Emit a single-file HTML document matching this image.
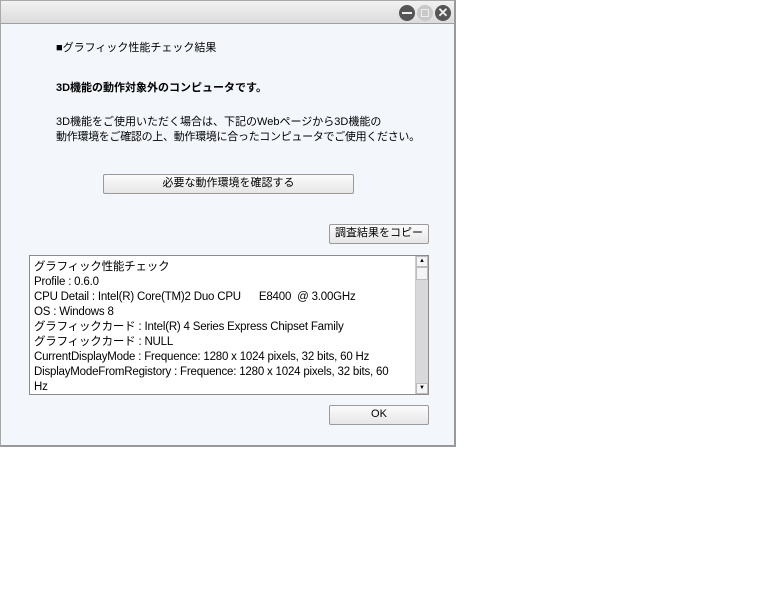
<!DOCTYPE html>
<html><head><meta charset="utf-8"><style>
*{margin:0;padding:0;box-sizing:border-box}
body{width:768px;height:614px;background:#fff;font-family:"Liberation Sans","Noto Sans CJK JP",sans-serif;font-size:11px;color:#000;position:relative;overflow:hidden}
#win{position:absolute;left:0;top:0;width:456px;height:447px;background:#f3f6fb;border:1px solid #a8a8a8;border-right:2px solid #999;border-bottom:2px solid #999}
#title{position:absolute;left:0;top:0;width:100%;height:23px;background:linear-gradient(#f2f2f2,#dcdcdc);border-bottom:1px solid #a0a0a0}
.c{position:absolute;top:4px;width:16px;height:16px;border-radius:50%}
.t{position:absolute;white-space:nowrap;line-height:15px}
.btn{position:absolute;border:1px solid #9a9a9a;border-radius:2px;background:linear-gradient(#fbfbfb,#e6e6e6);text-align:center;line-height:17px;font-size:11px}
#box{position:absolute;left:28px;top:254px;width:400px;height:140px;border:1px solid #8a8a8a;background:#fff;overflow:hidden}
#sb{position:absolute;right:0;top:0;width:13px;height:138px;background:#d8d8d8;border-left:1px solid #ccc}
.bt{font-size:11.5px;letter-spacing:-0.2px}
</style></head><body>
<div id="win">
<div id="title">
<div class="c" style="left:398px;background:#555"><div style="position:absolute;left:3px;top:7px;width:10px;height:2px;background:#eee"></div></div>
<div class="c" style="left:416px;background:#c8c8c8"><div style="position:absolute;left:4px;top:4px;width:8px;height:8px;border:1px solid #eee"></div></div>
<div class="c" style="left:434px;background:#555;color:#eee;font-size:13px;font-weight:bold;text-align:center;line-height:16px">✕</div>
</div>
<div class="t" style="left:55px;top:40px">■グラフィック性能チェック結果</div>
<div class="t" style="left:55px;top:80px;font-weight:bold">3D機能の動作対象外のコンピュータです。</div>
<div class="t" style="left:55px;top:114px">3D機能をご使用いただく場合は、下記のWebページから3D機能の</div>
<div class="t" style="left:55px;top:129px;letter-spacing:-0.3px">動作環境をご確認の上、動作環境に合ったコンピュータでご使用ください。</div>
<div class="btn" style="left:102px;top:173px;width:251px;height:20px">必要な動作環境を確認する</div>
<div class="btn" style="left:328px;top:223px;width:100px;height:20px">調査結果をコピー</div>
<div id="box">
<div class="t bt" style="left:4px;top:4px;line-height:15px">グラフィック性能チェック<br>Profile : 0.6.0<br>CPU Detail : Intel(R) Core(TM)2 Duo CPU &nbsp;&nbsp;&nbsp;&nbsp;&nbsp;E8400 &nbsp;@ 3.00GHz<br>OS : Windows 8<br>グラフィックカード : Intel(R) 4 Series Express Chipset Family<br>グラフィックカード : NULL<br>CurrentDisplayMode : Frequence: 1280 x 1024 pixels, 32 bits, 60 Hz<br>DisplayModeFromRegistory : Frequence: 1280 x 1024 pixels, 32 bits, 60<br>Hz</div>
<div id="sb">
<div style="position:absolute;left:0;top:0;width:12px;height:11px;background:#f4f4f4;border:1px solid #bbb;font-size:6px;text-align:center;line-height:9px">▲</div>
<div style="position:absolute;left:0;top:11px;width:12px;height:13px;background:#f4f4f4;border:1px solid #bbb"></div>
<div style="position:absolute;left:0;bottom:0;width:12px;height:11px;background:#f4f4f4;border:1px solid #bbb;font-size:6px;text-align:center;line-height:9px">▼</div>
</div>
</div>
<div class="btn" style="left:328px;top:404px;width:100px;height:20px">OK</div>
</div>
</body></html>
